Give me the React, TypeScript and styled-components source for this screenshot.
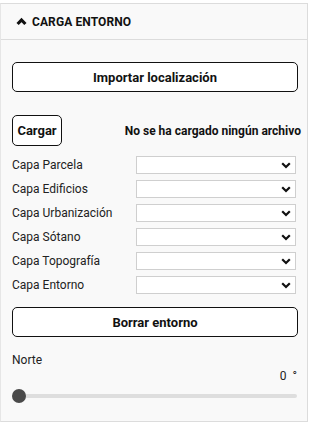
import React from "react";
import styled, { createGlobalStyle } from "styled-components";

const Global = createGlobalStyle`
  html, body { margin: 0; padding: 0; background: #ffffff; }
  body { font-family: Roboto, "Liberation Sans", Arial, sans-serif; color: #111; }
  * { box-sizing: border-box; }
`;

const Panel = styled.section`
  margin: 3px 2px 0 0;
  width: 308px;
  height: 419px;
  border: 1px solid #dcdcdc;
  border-left-color: #e6e6e6;
  background: #f9f9f9;
  display: flex;
  flex-direction: column;
`;

const Header = styled.header`
  height: 36px;
  display: flex;
  align-items: center;
  gap: 5px;
  padding: 0 0 0 15px;
  border-bottom: 1px solid #dcdcdc;
  font-weight: 700;
  font-size: 12px;
  letter-spacing: 0.1px;
  color: #111;
`;

const Body = styled.div`
  display: flex;
  flex-direction: column;
  padding: 22px 10px 0 11px;
`;

const WideButton = styled.button<{ $mt?: number }>`
  width: 286px;
  height: 30px;
  margin-top: ${(p) => p.$mt ?? 0}px;
  border: 1px solid #111;
  border-radius: 5px;
  background: #fff;
  font-family: Roboto, "Liberation Sans", Arial, sans-serif;
  font-weight: 700;
  font-size: 13px;
  color: #111;
  padding: 0;
`;

const FileRow = styled.div`
  margin-top: 23px;
  display: flex;
  align-items: center;
  justify-content: space-between;
`;

const SmallButton = styled.button`
  width: 50px;
  height: 31px;
  border: 1px solid #111;
  border-radius: 5px;
  background: #fff;
  font-family: Roboto, "Liberation Sans", Arial, sans-serif;
  font-weight: 700;
  font-size: 13px;
  color: #111;
  padding: 0;
`;

const FileName = styled.span`
  font-weight: 700;
  font-size: 12px;
  color: #111;
  margin-right: -4px;
`;

const Layers = styled.div`
  margin-top: 10px;
  display: flex;
  flex-direction: column;
  gap: 6px;
`;

const LayerRow = styled.div`
  display: grid;
  grid-template-columns: 124px 160px;
  align-items: center;
  height: 18px;
`;

const Label = styled.span`
  font-size: 12px;
  color: #222;
`;

const SelectBox = styled.div`
  height: 18px;
  border: 1px solid #cfcfcf;
  background: #fff;
  display: flex;
  align-items: center;
  justify-content: flex-end;
  padding-right: 4px;
`;

const Norte = styled.div`
  margin-top: 16px;
  font-size: 12px;
  color: #222;
`;

const Value = styled.div`
  margin-top: 2px;
  text-align: right;
  font-size: 12px;
  color: #222;
  white-space: pre;
`;

const Slider = styled.div`
  position: relative;
  margin-top: 6px;
  height: 14px;
  display: flex;
  align-items: center;
`;

const Track = styled.div`
  width: 100%;
  height: 4px;
  border-radius: 2px;
  background: #dedede;
`;

const Thumb = styled.div`
  position: absolute;
  left: 0;
  top: 0;
  width: 14px;
  height: 14px;
  border-radius: 50%;
  background: #4a4a4a;
`;

const Chevron = () => (
  <svg width="10" height="7" viewBox="0 0 10 7">
    <path d="M1.2 1.2 L5 5 L8.8 1.2" fill="none" stroke="#111" strokeWidth="2.2" />
  </svg>
);

const UpChevron = () => (
  <svg width="11" height="9" viewBox="0 0 11 9">
    <path d="M1.6 7 L5.5 3 L9.4 7" fill="none" stroke="#111" strokeWidth="3.2" />
  </svg>
);

const layers = [
  "Capa Parcela",
  "Capa Edificios",
  "Capa Urbanización",
  "Capa Sótano",
  "Capa Topografía",
  "Capa Entorno",
];

export default function App() {
  return (
    <>
      <Global />
      <Panel>
        <Header>
          <UpChevron />
          CARGA ENTORNO
        </Header>
        <Body>
          <WideButton>Importar localización</WideButton>
          <FileRow>
            <SmallButton>Cargar</SmallButton>
            <FileName>No se ha cargado ningún archivo</FileName>
          </FileRow>
          <Layers>
            {layers.map((l) => (
              <LayerRow key={l}>
                <Label>{l}</Label>
                <SelectBox>
                  <Chevron />
                </SelectBox>
              </LayerRow>
            ))}
          </Layers>
          <WideButton $mt={13}>Borrar entorno</WideButton>
          <Norte>Norte</Norte>
          <Value>{"0  °"}</Value>
          <Slider>
            <Track />
            <Thumb />
          </Slider>
        </Body>
      </Panel>
    </>
  );
}
